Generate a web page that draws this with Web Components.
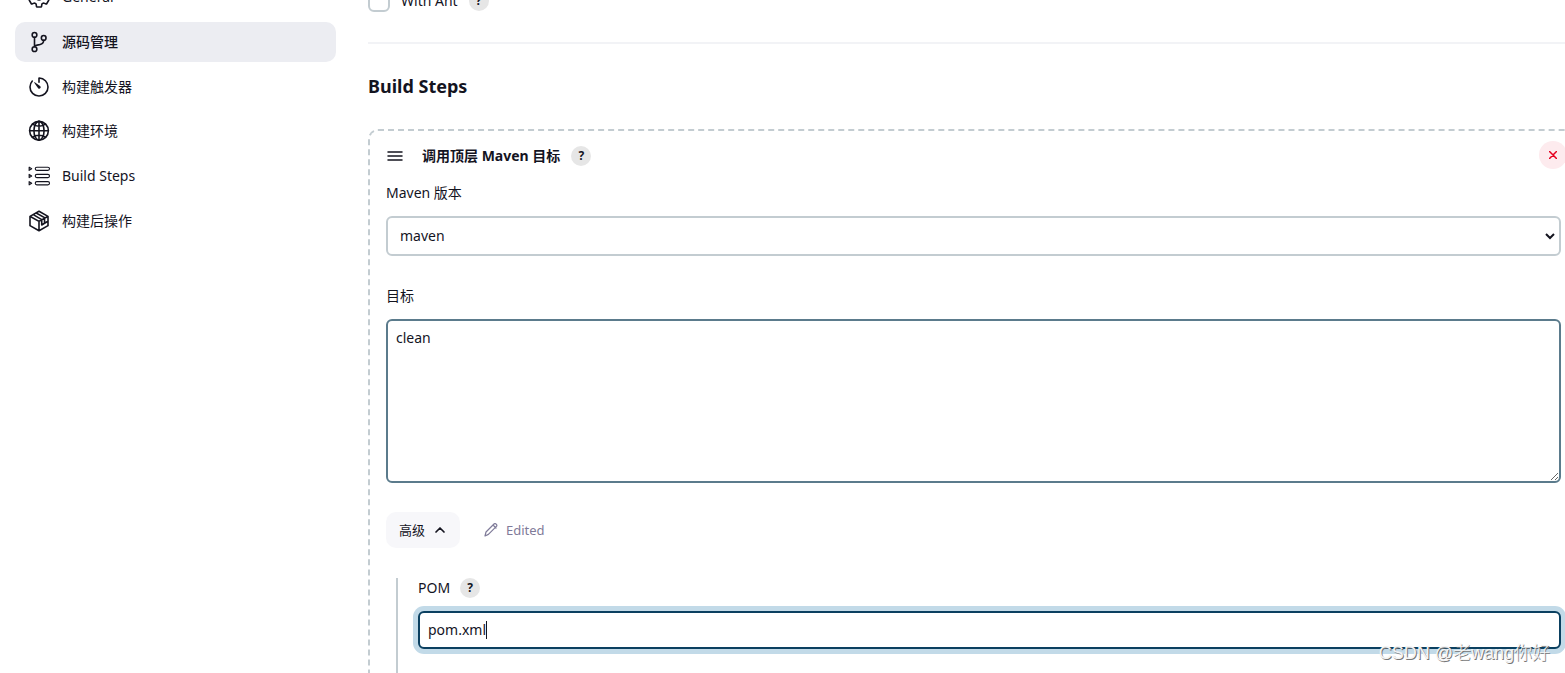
<!DOCTYPE html>
<html lang="zh-CN">
<head>
<meta charset="utf-8">
<title>Build configuration</title>
<style>
  html, body { margin: 0; height: 100%; overflow: hidden; background: #fff; }
  body { color: #14141f; font: 14px/20px "Noto Sans", "Noto Sans CJK SC", sans-serif; }
</style>
</head>
<body>
<job-config></job-config>

<script>
const define = (name, html) => {
  const template = document.createElement('template');
  template.innerHTML = html;
  customElements.define(name, class extends HTMLElement {
    constructor() {
      super();
      this.attachShadow({ mode: 'open' }).append(template.content.cloneNode(true));
    }
  });
};

/* Round "?" button that follows a label */
define('help-button', `
  <style>
    :host { display: inline-flex; }
    button { width: 20px; height: 20px; padding: 0; border: 0; border-radius: 50%;
      background: #e6e6e6; color: #14141f; font: bold 12px/20px "Noto Sans", sans-serif; text-align: center; }
  </style>
  <button type="button" title="Help">?</button>`);

/* Sidebar entry: icon slot plus text */
define('nav-item', `
  <style>
    :host { display: block; }
    a { display: flex; align-items: center; gap: 11px; height: 40px; padding: 0 12px;
      border-radius: 10px; color: inherit; text-decoration: none; }
    :host([active]) a { background: #ecedf2; font-weight: 500; }
    ::slotted(svg) { width: 24px; height: 24px; flex: none; }
  </style>
  <a href="#"><slot name="icon"></slot><span><slot></slot></span></a>`);

define('side-nav', `
  <style>
    :host { display: block; }
    nav { display: flex; flex-direction: column; justify-content: space-between; height: 264px; margin-top: -23px; }
    svg { fill: none; stroke: currentColor; stroke-width: 34; stroke-linecap: round; stroke-linejoin: round; }
    .fine { stroke-width: 24; }
  </style>
  <nav>
    <nav-item><svg slot="icon" viewBox="0 0 512 512"><path d="M262.29 192.31a64 64 0 1057.4 57.4 64.13 64.13 0 00-57.4-57.4zM416.39 256a154.34 154.34 0 01-1.53 20.79l45.21 35.46a10.81 10.81 0 012.45 13.75l-42.77 74a10.81 10.81 0 01-13.14 4.59l-44.9-18.08a16.11 16.11 0 00-15.17 1.75A164.48 164.48 0 01325 400.8a15.94 15.94 0 00-8.82 12.14l-6.73 47.89a11.08 11.08 0 01-10.68 9.17h-85.54a11.11 11.11 0 01-10.69-8.87l-6.72-47.82a16.07 16.07 0 00-9-12.22 155.3 155.3 0 01-21.46-12.57 16 16 0 00-15.11-1.71l-44.89 18.07a10.81 10.81 0 01-13.14-4.58l-42.77-74a10.8 10.8 0 012.45-13.75l38.21-30a16.05 16.05 0 006-14.08c-.36-4.17-.58-8.33-.58-12.5s.21-8.27.58-12.35a16 16 0 00-6.07-13.94l-38.19-30A10.81 10.81 0 0149.48 186l42.77-74a10.81 10.81 0 0113.14-4.59l44.9 18.08a16.11 16.11 0 0015.17-1.75A164.48 164.48 0 01187 111.2a15.94 15.94 0 008.82-12.14l6.73-47.89A11.08 11.08 0 01213.23 42h85.54a11.11 11.11 0 0110.69 8.87l6.72 47.82a16.07 16.07 0 009 12.22 155.3 155.3 0 0121.46 12.57 16 16 0 0015.11 1.71l44.89-18.07a10.81 10.81 0 0113.14 4.58l42.77 74a10.8 10.8 0 01-2.45 13.75l-38.21 30a16.05 16.05 0 00-6.05 14.08c.33 4.14.55 8.3.55 12.47z"/></svg>General</nav-item>
    <nav-item active><svg slot="icon" viewBox="0 0 512 512"><circle cx="160" cy="104" r="50"/><circle cx="160" cy="408" r="50"/><circle cx="356" cy="168" r="50"/><path d="M160 358V154M356 218c0 46-24 76-76 90-50 14-116 14-120 50"/></svg>源码管理</nav-item>
    <nav-item><svg slot="icon" viewBox="0 0 512 512"><path d="M112.91 128A191.85 191.85 0 0064 254c-1.18 106.35 85.65 193.8 192 194 106.2.2 192-85.83 192-192 0-104.54-83.55-189.61-187.5-192a4.36 4.36 0 00-4.5 4.37V152"/><path fill="currentColor" stroke="none" d="M233.38 278.63l-79-113a8.13 8.13 0 0111.32-11.32l113 79a32.5 32.5 0 01-37.25 53.26 33.21 33.21 0 01-8.07-7.94z"/></svg>构建触发器</nav-item>
    <nav-item><svg slot="icon" viewBox="0 0 512 512"><circle cx="256" cy="250" r="200"/><ellipse cx="256" cy="250" rx="108" ry="200"/><path d="M117 111c38 27 86 43 139 43s101-16 139-43M395 389c-38-27-86-43-139-43s-101 16-139 43M256 50v400M456 250H56"/></svg>构建环境</nav-item>
    <nav-item><svg slot="icon" class="fine" viewBox="0 0 512 512"><rect x="176" y="68" width="304" height="68" rx="34"/><rect x="176" y="222" width="304" height="68" rx="34"/><rect x="176" y="376" width="304" height="68" rx="34"/><path d="M46 68v68l54-34zM46 222v68l54-34zM46 376v68l54-34z"/></svg>Build Steps</nav-item>
    <nav-item><svg slot="icon" viewBox="0 0 512 512"><path d="M448 355V157L256 48 64 157v198l192 109zM70 160l186 103 186-103M256 463V263M196 84l178 100v120l54-32M134 120l180 106v116l60-38"/></svg>构建后操作</nav-item>
  </nav>`);

define('build-step', `
  <style>
    :host { display: block; box-sizing: border-box; padding: 10px 16px 60px; border: 2px dashed #c3ccd1; border-radius: 10px; }
    header { display: flex; align-items: center; height: 30px; margin: 0 -6px 12px 0; }
    svg { display: block; fill: none; stroke: currentColor; stroke-linecap: round; }
    .grip { width: 18px; height: 18px; margin-right: 18px; stroke-width: 1.5; }
    b { margin-right: 11px; }
    .close { display: grid; place-items: center; width: 28px; height: 28px; margin: 0 0 2px auto; padding: 0;
      border: 0; border-radius: 50%; background: #fdebee; color: #e6001f; }
    .close svg { width: 8px; height: 8px; stroke-width: 1.5; }
  </style>
  <header>
    <svg class="grip" viewBox="0 0 18 18"><path d="M2 5h14M2 9h14M2 13h14"/></svg>
    <b><slot name="title"></slot></b><help-button></help-button>
    <button class="close" type="button" aria-label="Delete"><svg viewBox="0 0 8 8"><path d="M.5.5l7 7M7.5.5l-7 7"/></svg></button>
  </header>
  <slot></slot>`);

define('select-field', `
  <style>
    :host { display: block; }
    label { display: block; margin-bottom: 13px; }
    .box { display: grid; }
    select, svg { grid-area: 1 / 1; }
    select { appearance: none; box-sizing: border-box; width: 100%; height: 40px; padding: 0 12px; border: 2px solid #c3ccd1;
      border-radius: 6px; background: #fff; color: inherit; font: inherit; }
    svg { width: 10px; height: 10px; margin-right: 6px; place-self: center end; pointer-events: none;
      fill: none; stroke: currentColor; stroke-width: 2; }
  </style>
  <label for="version">Maven 版本</label>
  <div class="box"><select id="version"><option>maven</option></select>
  <svg viewBox="0 0 10 10"><path d="M1 3l4 4 4-4"/></svg></div>`);

define('goals-field', `
  <style>
    :host { display: block; }
    label { display: block; margin-bottom: 13px; }
    textarea { display: block; box-sizing: border-box; width: 100%; height: 164px; padding: 7px 8px; resize: vertical;
      border: 2px solid #5b7b8c; border-radius: 6px; background: #fff; color: inherit; font: inherit; outline: 0; }
  </style>
  <label for="goals">目标</label>
  <textarea id="goals">clean</textarea>`);

define('advanced-bar', `
  <style>
    :host { display: flex; align-items: center; gap: 24px; font-size: 13px; }
    button { display: flex; align-items: center; gap: 9px; height: 36px; padding: 0 14px 0 13px; border: 0; border-radius: 10px;
      background: #f7f7fa; color: inherit; font: inherit; }
    svg { display: block; fill: none; stroke: currentColor; stroke-linecap: round; stroke-linejoin: round; }
    .chevron { width: 12px; height: 12px; stroke-width: 1.7; }
    .edited { display: flex; align-items: center; gap: 8px; color: #7f7b99; }
    .edited svg { width: 14px; height: 14px; stroke-width: 1.2; }
  </style>
  <button type="button" aria-expanded="true">高级<svg class="chevron" viewBox="0 0 12 12"><path d="M2 8l4-4 4 4"/></svg></button>
  <span class="edited"><svg viewBox="0 0 14 14"><path d="M1 13l1-4 8-8q1-1 2.200 .2t.2 2.200l-8 8zM9 2l3 3"/></svg>Edited</span>`);

define('pom-field', `
  <style>
    :host { display: block; margin-left: 10px; padding: 0 0 100px 20px; border-left: 2px solid #c3ccd1; }
    .label { display: flex; align-items: center; gap: 10px; height: 20px; margin-bottom: 13px; }
    .box { position: relative; }
    input { display: block; box-sizing: border-box; width: 100%; height: 38px; padding: 0 8px 2px; border: 2px solid #0b4060; border-radius: 6px;
      background: #fff; color: inherit; font: inherit; outline: 0; box-shadow: 0 0 0 5px #c2dae8; caret-color: transparent; }
    .caret { position: absolute; top: 10px; left: 68px; width: 1px; height: 18px; background: #14141f; }
  </style>
  <div class="label"><label for="pom">POM</label><help-button></help-button></div>
  <div class="box"><input id="pom" type="text" value="pom.xml"><span class="caret"></span></div>`);

define('ant-option', `
  <style>
    :host { display: flex; align-items: center; height: 22px; }
    input { appearance: none; box-sizing: border-box; width: 22px; height: 22px; margin: 0 11px 0 0; border: 2px solid #c3ccd1; border-radius: 6px; }
    label { margin-right: 11px; }
  </style>
  <input id="ant" type="checkbox"><label for="ant">With Ant</label><help-button></help-button>`);

define('job-config', `
  <style>
    :host { position: relative; display: grid; grid-template-columns: 321px minmax(0, 1fr); column-gap: 32px;
      height: 100%; padding-left: 15px; overflow: hidden; }
    main { margin: -10px -14px 0 0; }
    hr { height: 2px; margin: 30px 0; border: 0; background: #f2f3f6; }
    h2 { margin: 0 0 31px; font-size: 18px; line-height: 24px; }
    goals-field { margin: 30px 0 29px; }
    pom-field { margin-top: 30px; }
    .credit { position: absolute; right: 15px; bottom: 8px; color: #f4f4f4; font: 300 18px/24px "Liberation Sans", "Noto Sans CJK SC", sans-serif;
      text-shadow: 1px 1px 0 #777; }
  </style>
  <side-nav></side-nav>
  <main>
    <ant-option></ant-option>
    <hr>
    <h2>Build Steps</h2>
    <build-step>
      <span slot="title">调用顶层 Maven 目标</span>
      <select-field></select-field>
      <goals-field></goals-field>
      <advanced-bar></advanced-bar>
      <pom-field></pom-field>
    </build-step>
  </main>
  <span class="credit">CSDN @老wang你好</span>`);
</script>
</body>
</html>
